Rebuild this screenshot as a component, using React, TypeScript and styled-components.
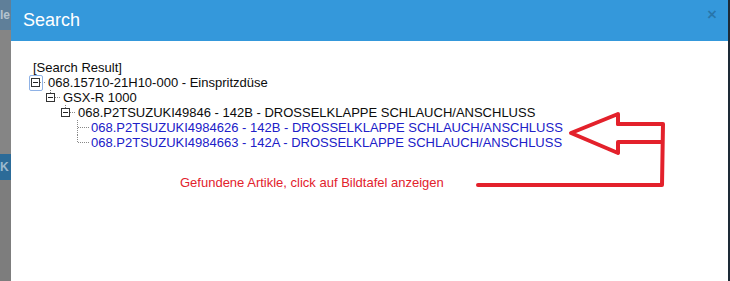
import React from "react";
import styled, { createGlobalStyle } from "styled-components";

const Global = createGlobalStyle`
  html, body { margin: 0; padding: 0; }
  body {
    width: 730px;
    height: 281px;
    overflow: hidden;
    background: #6f6f6f;
    font-family: "Liberation Sans", Arial, sans-serif;
  }
`;

const Page = styled.div`
  display: flex;
  width: 730px;
  height: 281px;
  overflow: hidden;
`;

const Backdrop = styled.div`
  width: 11px;
  flex: none;
  display: flex;
  flex-direction: column;
  background: #7b7b7b;
  box-shadow: inset -2px 0 2px rgba(0, 0, 0, 0.35);
  overflow: hidden;
`;

const BackdropBand = styled.div<{ $h: number; $bg: string }>`
  height: ${(p) => p.$h}px;
  flex: none;
  background: ${(p) => p.$bg};
  color: rgba(255, 255, 255, 0.55);
  font-size: 12px;
  font-weight: bold;
  line-height: ${(p) => p.$h}px;
  padding-left: 0;
  white-space: nowrap;
`;

const Modal = styled.div`
  width: 717px;
  flex: none;
  display: flex;
  flex-direction: column;
  background: #fff;
  border-right: 2px solid #1d2a36;
`;

const Header = styled.div`
  height: 41px;
  flex: none;
  display: flex;
  align-items: center;
  justify-content: space-between;
  background: #3498db;
  padding: 0 11px 0 12px;
`;

const Title = styled.h4`
  margin: 0;
  color: #fff;
  font-size: 18px;
  font-weight: normal;
`;

const Close = styled.span`
  color: rgba(0, 0, 0, 0.22);
  font-size: 17px;
  font-weight: bold;
  line-height: 1;
  margin-top: -12px;
`;

const Body = styled.div`
  position: relative;
  flex: 1;
  padding: 19px 20px 0 20px;
  font-size: 13px;
  color: #0c0c0c;
`;

const Tree = styled.div`
  display: flex;
  flex-direction: column;
`;

const Row = styled.div<{ $level: number }>`
  display: flex;
  align-items: center;
  height: 15px;
  line-height: 15px;
  padding-left: ${(p) => (p.$level === 0 ? 2 : (p.$level - 1) * 15)}px;
  white-space: nowrap;
`;

const NodeText = styled.span<{ $link?: boolean }>`
  color: ${(p) => (p.$link ? "#2020c8" : "#0c0c0c")};
`;

const ExpanderWrap = styled.span<{ $focus?: boolean }>`
  display: inline-flex;
  width: 17px;
  height: 15px;
  flex: none;
  position: relative;
  &::before {
    content: "";
    display: ${(p) => (p.$focus ? "block" : "none")};
    position: absolute;
    left: -2px;
    top: 0;
    width: 12px;
    height: 14px;
    border: 1px solid #8fb2e6;
    border-radius: 2px;
  }
`;

const LeafWrap = styled.span`
  display: inline-flex;
  width: 15px;
  height: 15px;
  flex: none;
`;

const Note = styled.p`
  margin: 25px 0 0 149px;
  color: #e2222c;
  font-size: 13px;
  line-height: 15px;
`;

const Annotation = styled.svg`
  position: absolute;
  left: 459px;
  top: 64px;
  overflow: visible;
`;

function Expander({ stub, focus }: { stub?: boolean; focus?: boolean }) {
  return (
    <ExpanderWrap $focus={focus}>
      <svg width="17" height="15" viewBox="0 0 17 15">
        {stub && (
          <line x1="4.5" y1="0" x2="4.5" y2="3" stroke="#777" strokeDasharray="1 1" />
        )}
        <rect x="0.5" y="3.5" width="8" height="8" fill="#fff" stroke="#333" />
        <line x1="2" y1="7.5" x2="7" y2="7.5" stroke="#222" />
        <line x1="9" y1="7.5" x2="15" y2="7.5" stroke="#888" strokeDasharray="1 1" />
      </svg>
    </ExpanderWrap>
  );
}

function Leaf({ last }: { last?: boolean }) {
  return (
    <LeafWrap>
      <svg width="15" height="15" viewBox="0 0 15 15">
        <line x1="1.5" y1="0" x2="1.5" y2={last ? 7.5 : 15} stroke="#888" strokeDasharray="1 1" />
        <line x1="2" y1="7.5" x2="13" y2="7.5" stroke="#888" strokeDasharray="1 1" />
      </svg>
    </LeafWrap>
  );
}

export default function App() {
  return (
    <>
      <Global />
      <Page>
        <Backdrop>
          <BackdropBand $h={30} $bg="#5f7f99">le</BackdropBand>
          <BackdropBand $h={124} $bg="#858585" />
          <BackdropBand $h={26} $bg="#2c6b98">K</BackdropBand>
          <BackdropBand $h={101} $bg="#7d7d7d" />
        </Backdrop>
        <Modal>
          <Header>
            <Title>Search</Title>
            <Close>×</Close>
          </Header>
          <Body>
            <Tree>
              <Row $level={0}>
                <NodeText>[Search Result]</NodeText>
              </Row>
              <Row $level={1}>
                <Expander focus />
                <NodeText>068.15710-21H10-000 - Einspritzdüse</NodeText>
              </Row>
              <Row $level={2}>
                <Expander stub />
                <NodeText>GSX-R 1000</NodeText>
              </Row>
              <Row $level={3}>
                <Expander stub />
                <NodeText>068.P2TSUZUKI49846 - 142B - DROSSELKLAPPE SCHLAUCH/ANSCHLUSS</NodeText>
              </Row>
              <Row $level={4}>
                <Leaf />
                <NodeText $link>068.P2TSUZUKI4984626 - 142B - DROSSELKLAPPE SCHLAUCH/ANSCHLUSS</NodeText>
              </Row>
              <Row $level={4}>
                <Leaf last />
                <NodeText $link>068.P2TSUZUKI4984663 - 142A - DROSSELKLAPPE SCHLAUCH/ANSCHLUSS</NodeText>
              </Row>
            </Tree>
            <Note>Gefundene Artikle, click auf Bildtafel anzeigen</Note>
            <Annotation width="200" height="87" viewBox="0 0 200 87">
              <g fill="none" stroke="#e3212b" strokeWidth="4" strokeLinejoin="round" strokeLinecap="round">
                <polyline points="148,19 148,9 101,28 148,48 148,37 192,37" />
                <polyline points="148,19 193,19 192,80 8,80" />
              </g>
            </Annotation>
          </Body>
        </Modal>
      </Page>
    </>
  );
}
